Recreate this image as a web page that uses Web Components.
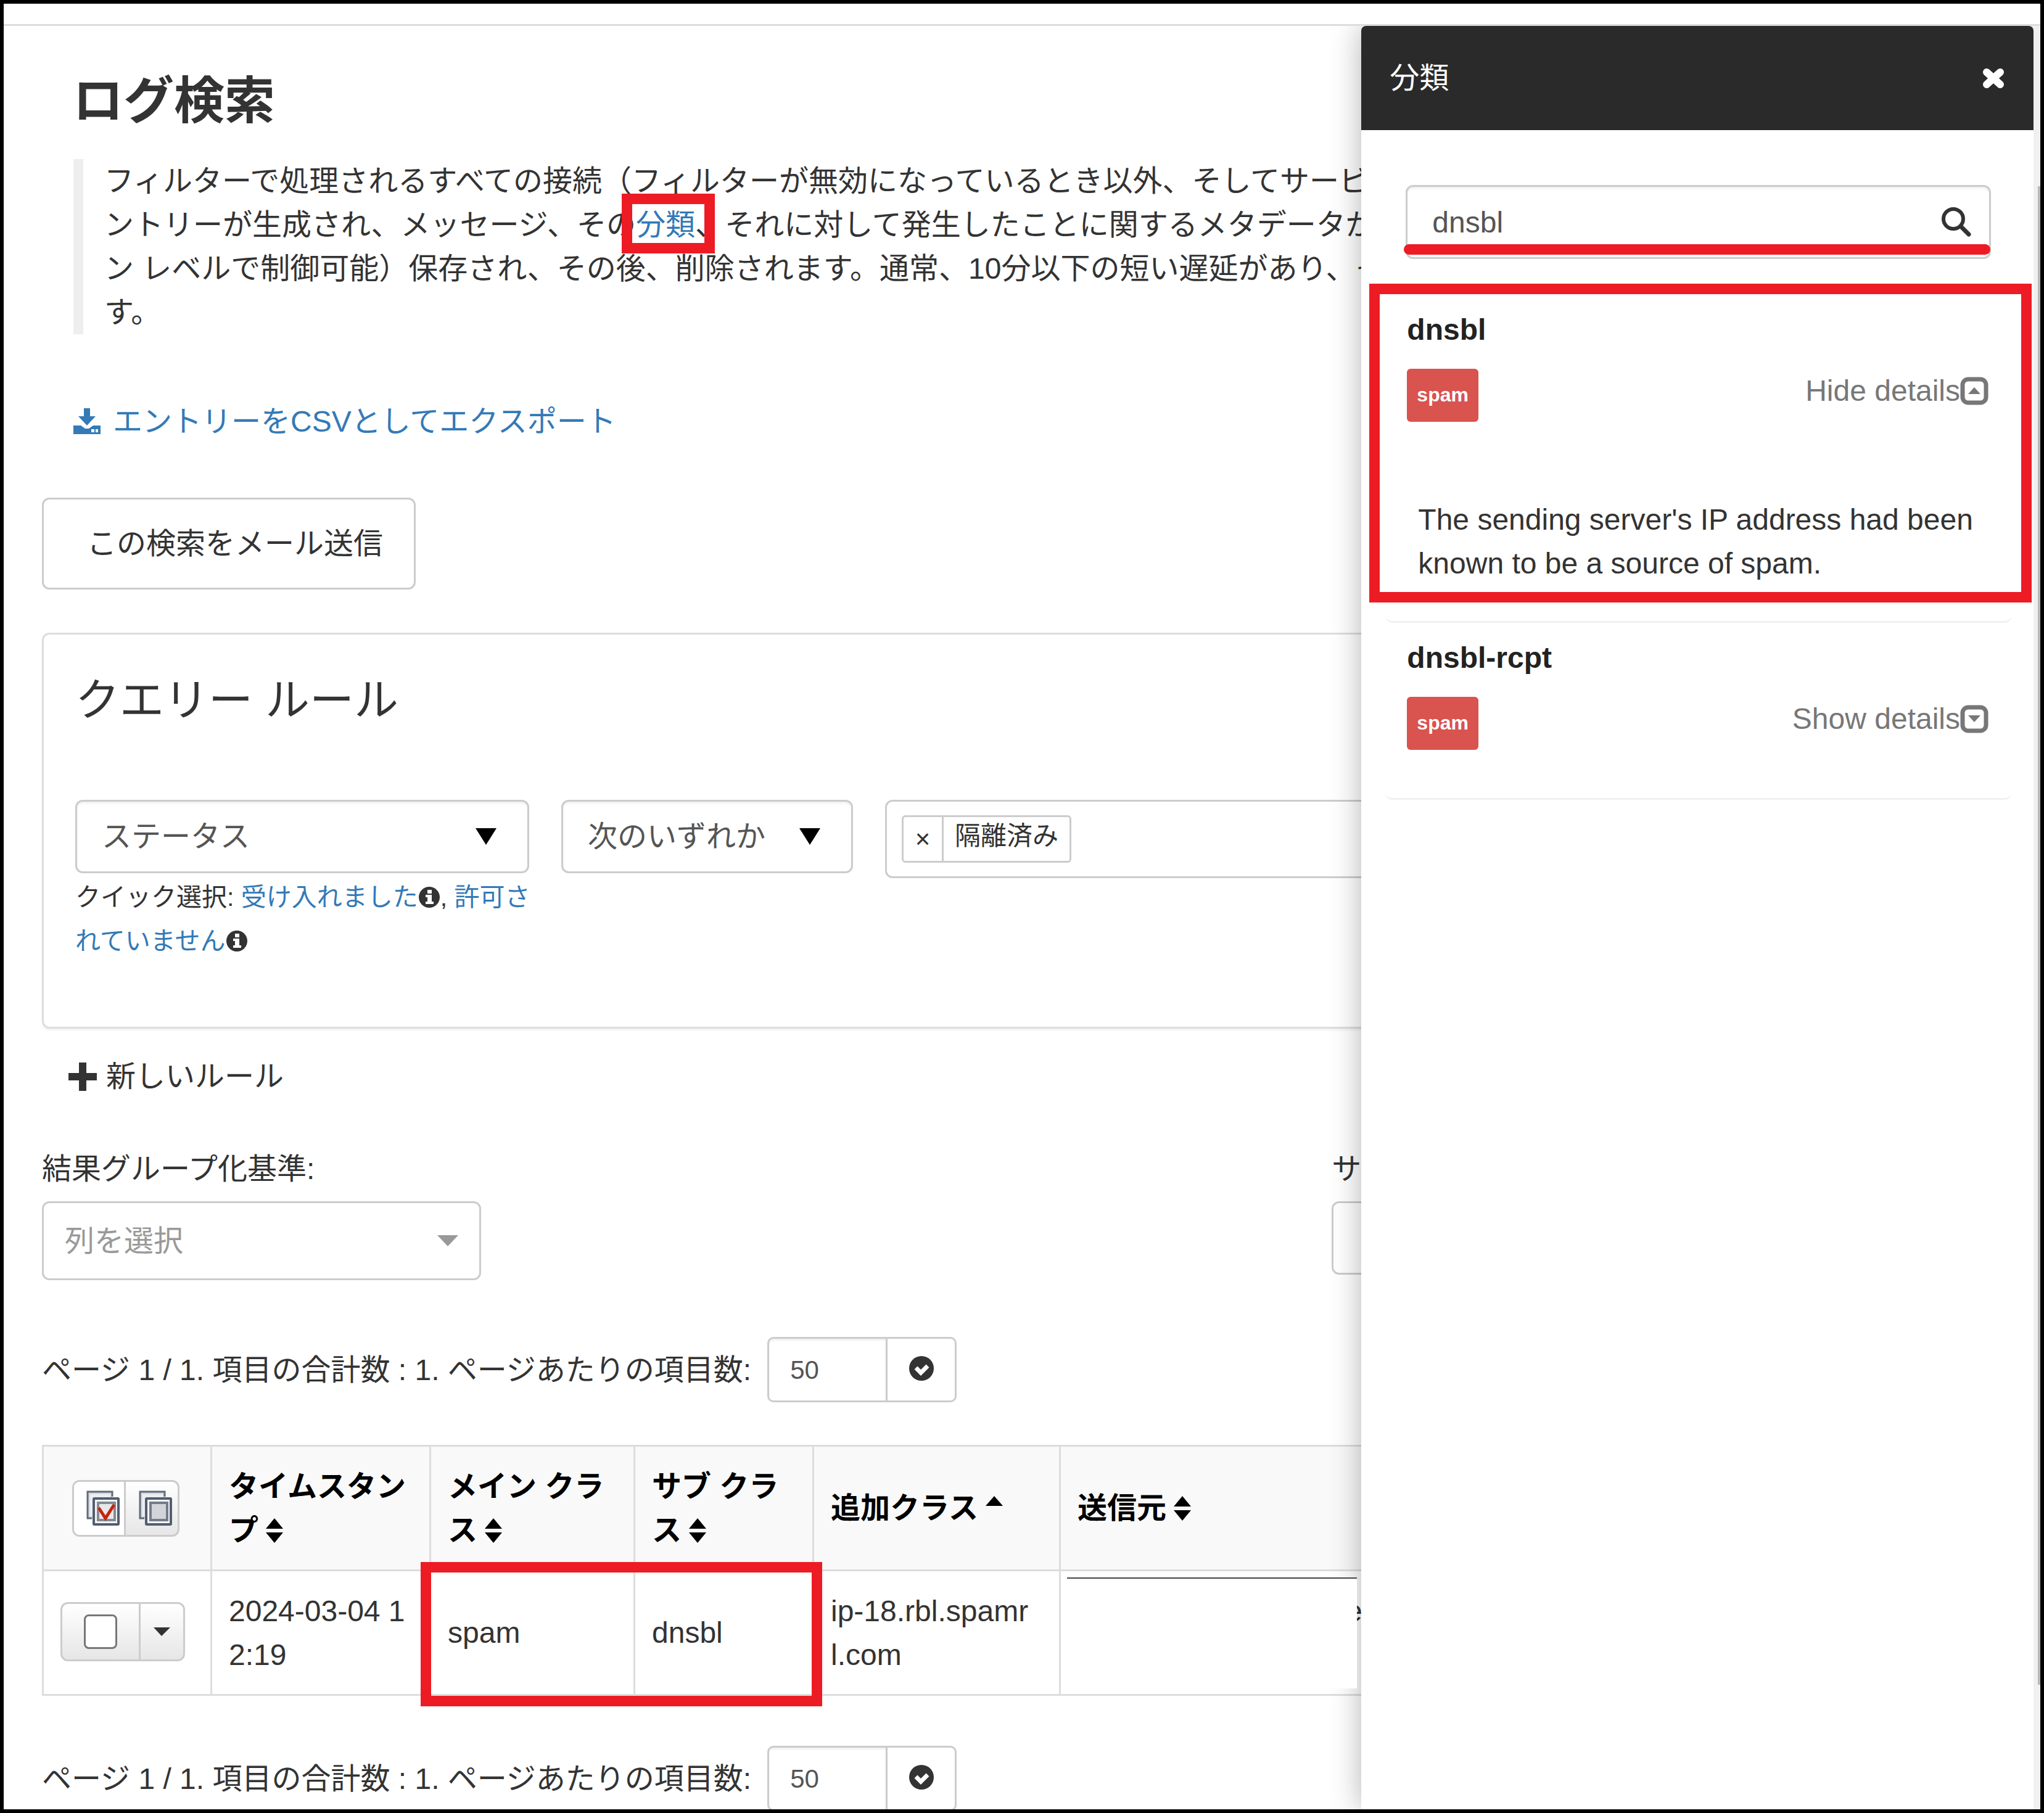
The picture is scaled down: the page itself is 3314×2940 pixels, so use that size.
<!DOCTYPE html>
<html lang="ja">
<head>
<meta charset="utf-8">
<title>ログ検索</title>
<style>
	body {
		margin: 0;
		font: 48px/71px "Liberation Sans", "Noto Sans CJK JP", sans-serif;
		color: #333;
		background: #fff;
	}
</style>
</head>
<body>
<log-app></log-app>

<script>
const CONTROL_STYLES = `
	* { box-sizing: border-box; }
	button, input, select { font: inherit; color: inherit; margin: 0; }
	a { color: #337ab7; text-decoration: none; }
`;

const ICONS = {
	download: {
		box: "0 0 44 44",
		body: `<path d="M17 0h10v13h9L22 28 8 13h9z"/><path fill-rule="evenodd" d="M0 28h12l7 5h6l7-5h12v14H0zM29 34v5h5v-5zM36 34v5h4v-5z"/>`,
	},
	times: {
		box: "0 0 38 36",
		body: `<path d="M8 8l22 20M30 8L8 28" fill="none" stroke="currentColor" stroke-width="12" stroke-linecap="round"/>`,
	},
	search: {
		box: "0 0 50 50",
		body: `<circle cx="20" cy="20" r="16" fill="none" stroke="currentColor" stroke-width="6"/><path d="M32 32l13 13" stroke="currentColor" stroke-width="7" stroke-linecap="round"/>`,
	},
	plus: { box: "0 0 46 46", body: `<path d="M17 0h12v17h17v12H29v17H17V29H0V17h17z"/>` },
	down: { box: "0 0 34 27", body: `<path d="M0 0h34L17 27z"/>` },
	caret: { box: "0 0 34 18", body: `<path d="M0 0h34L17 18z"/>` },
	"caret-small": { box: "0 0 27 14", body: `<path d="M0 0h27L13 14z"/>` },
	sort: { box: "0 0 28 40", body: `<path d="M14 0l14 17H0zM0 23h28L14 40z"/>` },
	"sort-up": { box: "0 0 28 40", body: `<path d="M14 0l14 16H0z"/>` },
	info: {
		box: "0 0 36 36",
		body: `<circle cx="18" cy="18" r="17"/><path fill="#fff" d="M15 6h7v6h-7zM12 14h10v11h3v4H12v-4h3v-7h-3z"/>`,
	},
	check: {
		box: "0 0 40 40",
		body: `<circle cx="20" cy="20" r="20"/><path d="M11 19l8 8 11-11" fill="none" stroke="#fff" stroke-width="7"/>`,
	},
	"square-up": {
		box: "0 0 46 46",
		body: `<rect x="4" y="4" width="38" height="38" rx="9" fill="none" stroke="currentColor" stroke-width="7"/><path d="M23 17l10 11H13z"/>`,
	},
	"square-down": {
		box: "0 0 46 46",
		body: `<rect x="4" y="4" width="38" height="38" rx="9" fill="none" stroke="currentColor" stroke-width="7"/><path d="M23 28l10-11H13z"/>`,
	},
	"check-all": {
		box: "0 0 54 57",
		body: `<path d="M9 45H2V2h40v8" fill="#d9dbe0" stroke="#5f6b7d" stroke-width="3"/><path d="M6 42V6h33v6H12v30z" fill="#eceef1"/><rect x="12" y="13" width="40" height="42" rx="1" fill="#f4f4f5" stroke="#525e70" stroke-width="4"/><rect x="19" y="20" width="27" height="28" fill="#e8e8ea" stroke="#858b95" stroke-width="4"/><path d="M20 28l11 17 14-22" fill="none" stroke="#c8230c" stroke-width="5"/>`,
	},
	"check-none": {
		box: "0 0 54 57",
		body: `<path d="M9 45H2V2h40v8" fill="#d9dbe0" stroke="#5f6b7d" stroke-width="3"/><path d="M6 42V6h33v6H12v30z" fill="#eceef1"/><rect x="12" y="13" width="40" height="42" rx="1" fill="#f4f4f5" stroke="#525e70" stroke-width="4"/><rect x="19" y="20" width="27" height="28" fill="#d3d4da" stroke="#747c89" stroke-width="4"/>`,
	},
};

class LogIconElement extends HTMLElement {
	constructor() {
		super();
		this.attachShadow({ mode: "open" });
	}

	connectedCallback() {
		const icon = ICONS[this.getAttribute("name")];
		const [, , width, height] = icon.box.split(" ");
		this.shadowRoot.innerHTML = `
			<style>
				:host { display: inline-block; flex: none; line-height: 0; }
				svg { display: block; fill: currentColor; }
			</style>
			<svg viewBox="${icon.box}" width="${width}" height="${height}" aria-hidden="true">${icon.body}</svg>
		`;
	}
}

class LogSelectElement extends HTMLElement {
	constructor() {
		super();
		this.attachShadow({ mode: "open" });
	}

	connectedCallback() {
		const value = this.getAttribute("value");
		const label = this.getAttribute("label");
		const icon = this.getAttribute("icon") || "down";
		this.shadowRoot.innerHTML = `
			<style>
				${CONTROL_STYLES}
				:host { display: grid; align-items: center; height: 119px; color: #555; }
				select, log-icon { grid-area: 1 / 1; }
				select {
					appearance: none;
					width: 100%;
					height: 100%;
					padding: 0 40px;
					border: 3px solid #ccc;
					border-radius: 12px;
					background: #fff;
					box-shadow: inset 0 3px 3px rgba(0, 0, 0, 0.06);
				}
				log-icon { justify-self: end; margin-right: 53px; color: #000; pointer-events: none; }
				:host([muted]) { height: 128px; color: #999; }
				:host([muted]) select { padding: 0 34px; box-shadow: none; }
				:host([muted]) log-icon { margin-right: 37px; color: #999; }
			</style>
			<select aria-label="${label}"><option>${value}</option></select>
			<log-icon name="${icon}"></log-icon>
		`;
	}
}

class LogRuleElement extends HTMLElement {
	constructor() {
		super();
		this.attachShadow({ mode: "open" });
	}

	connectedCallback() {
		this.shadowRoot.innerHTML = `
			<style>
				${CONTROL_STYLES}
				:host {
					display: block;
					padding: 66px 51px 103px;
					border: 3px solid #ddd;
					border-radius: 12px;
					box-shadow: 0 3px 3px rgba(0, 0, 0, 0.05);
				}
				h2 { margin: 0 0 122px; font-size: 72px; line-height: 80px; font-weight: 400; }
				.row { display: flex; align-items: flex-start; gap: 52px; }
				.field { width: 736px; }
				.operator { width: 473px; }
				.quick { margin: 4px 0 0; font-size: 41px; white-space: nowrap; }
				.quick log-icon { vertical-align: -4px; }
				.tags {
					flex: 1;
					height: 127px;
					padding: 22px 24px;
					border: 3px solid #ccc;
					border-radius: 12px;
				}
				.tag {
					display: inline-flex;
					height: 77px;
					border: 3px solid #ccc;
					border-radius: 6px;
					font-size: 42px;
					line-height: 62px;
				}
				.tag button {
					width: 65px;
					padding: 0;
					border: 0;
					border-right: 3px solid #ccc;
					background: none;
				}
				.tag span { padding: 0 18px; }
			</style>
			<h2>クエリー ルール</h2>
			<div class="row">
				<div class="field">
					<log-select label="フィールド" value="ステータス"></log-select>
					<p class="quick">クイック選択: <a href="#">受け入れました</a><log-icon name="info"></log-icon>, <a href="#">許可さ<br>れていません</a><log-icon name="info"></log-icon></p>
				</div>
				<log-select class="operator" label="条件" value="次のいずれか"></log-select>
				<div class="tags"><div class="tag"><button type="button">×</button><span>隔離済み</span></div></div>
			</div>
		`;
	}
}

class LogPagerElement extends HTMLElement {
	constructor() {
		super();
		this.attachShadow({ mode: "open" });
	}

	connectedCallback() {
		this.shadowRoot.innerHTML = `
			<style>
				${CONTROL_STYLES}
				:host { display: flex; align-items: center; gap: 26px; white-space: nowrap; }
				.group { display: flex; height: 106px; }
				input {
					width: 195px;
					padding: 0 34px;
					border: 3px solid #ccc;
					border-radius: 10px 0 0 10px;
					box-shadow: inset 0 3px 3px rgba(0, 0, 0, 0.06);
					font-size: 42px;
					color: #555;
				}
				button {
					display: grid;
					place-items: center;
					width: 112px;
					padding: 0 0 4px;
					border: 3px solid #ccc;
					border-left: 0;
					border-radius: 0 10px 10px 0;
					background: #fff;
				}
			</style>
			<label for="size">ページ 1 / 1. 項目の合計数 : 1. ページあたりの項目数:</label>
			<div class="group">
				<input id="size" type="text" value="50">
				<button type="button" aria-label="適用"><log-icon name="check"></log-icon></button>
			</div>
		`;
	}
}

class LogTableElement extends HTMLElement {
	constructor() {
		super();
		this.attachShadow({ mode: "open" });
	}

	connectedCallback() {
		this.shadowRoot.innerHTML = `
			<style>
				${CONTROL_STYLES}
				:host { display: block; position: relative; }
				table { width: 100%; table-layout: fixed; border-collapse: collapse; }
				th, td {
					height: 202px;
					padding: 28px 27px;
					border: 3px solid #ddd;
					text-align: left;
					vertical-align: middle;
				}
				th { background: #f9f9f9; color: #000; }
				th log-icon { vertical-align: -4px; margin-left: 12px; }
				.tools { padding: 0 4px 0 0; text-align: center; }
				td.tools { padding: 0 14px 4px 0; }
				.group {
					display: inline-flex;
					vertical-align: middle;
					border: 3px solid #ccc;
					border-radius: 12px;
					overflow: hidden;
					background: linear-gradient(#fff, #e6e6e6);
				}
				.group button {
					display: grid;
					place-items: center;
					width: 84px;
					height: 86px;
					padding: 0;
					border: 0;
					background: none;
				}
				.group > :first-child { border-right: 3px solid #ccc; }
				.group .on { background: #fff; }
				.pick { display: grid; place-items: center; width: 127px; height: 90px; }
				.pick input {
					appearance: none;
					width: 54px;
					height: 56px;
					border: 3px solid #777;
					border-radius: 8px;
					background: #fff;
				}
				.group .more { width: 69px; height: 90px; }
				.sender { padding: 10px 0 0 10px; vertical-align: top; }
				.sender div { display: flex; }
				.cover { z-index: 1; flex: none; width: 470px; height: 180px; border-top: 2px solid #444; background: #fff; }
				.address { margin: 19px 0 0 -18px; }
				.mark {
					position: absolute;
					left: 614px;
					top: 190px;
					width: 651px;
					height: 234px;
					border: 17px solid #ed1c24;
				}
			</style>
			<table>
				<colgroup>
					<col style="width: 273px"><col style="width: 355px"><col style="width: 331px">
					<col style="width: 290px"><col style="width: 400px"><col>
				</colgroup>
				<thead>
					<tr>
						<th class="tools">
							<div class="group">
								<button class="on" type="button" aria-label="すべて選択"><log-icon name="check-all"></log-icon></button>
								<button type="button" aria-label="選択解除"><log-icon name="check-none"></log-icon></button>
							</div>
						</th>
						<th>タイムスタン<br>プ<log-icon name="sort"></log-icon></th>
						<th>メイン クラ<br>ス<log-icon name="sort"></log-icon></th>
						<th>サブ クラ<br>ス<log-icon name="sort"></log-icon></th>
						<th>追加クラス<log-icon name="sort-up"></log-icon></th>
						<th>送信元<log-icon name="sort"></log-icon></th>
					</tr>
				</thead>
				<tbody>
					<tr>
						<td class="tools">
							<div class="group">
								<label class="pick"><input type="checkbox" aria-label="行を選択"></label>
								<button class="more" type="button" aria-label="操作"><log-icon name="caret-small"></log-icon></button>
							</div>
						</td>
						<td>2024-03-04 1<br>2:19</td>
						<td>spam</td>
						<td>dnsbl</td>
						<td>ip-18.rbl.spamr<br>l.com</td>
						<td class="sender"><div><span class="cover"></span><span class="address">e</span></div></td>
					</tr>
				</tbody>
			</table>
			<div class="mark"></div>
		`;
	}
}

class ClassCardElement extends HTMLElement {
	constructor() {
		super();
		this.attachShadow({ mode: "open" });
	}

	connectedCallback() {
		const open = this.hasAttribute("open");
		this.shadowRoot.innerHTML = `
			<style>
				${CONTROL_STYLES}
				:host {
					display: block;
					position: relative;
					padding: 21px 38px 0 35px;
					border-bottom: 3px solid #f1f1f1;
					border-radius: 12px;
				}
				h3 { margin: 0 0 28px; font-size: 48px; color: #222; }
				.row { display: flex; justify-content: space-between; align-items: flex-start; padding-bottom: 78px; }
				.badge {
					height: 86px;
					padding: 0 16px;
					border-radius: 6px;
					background: #d9534f;
					color: #fff;
					font-size: 32px;
					font-weight: 700;
					line-height: 84px;
				}
				button {
					display: flex;
					align-items: center;
					padding: 0;
					border: 0;
					background: none;
					color: #777;
				}
				.details { padding: 45px 12px 58px 18px; }
				:host([open])::after {
					content: "";
					position: absolute;
					inset: -18px -32px 30px -26px;
					border: 17px solid #ed1c24;
					pointer-events: none;
				}
			</style>
			<h3>${this.getAttribute("name")}</h3>
			<div class="row">
				<span class="badge">spam</span>
				<button type="button">${open ? "Hide" : "Show"} details<log-icon name="${open ? "square-up" : "square-down"}"></log-icon></button>
			</div>
			${open ? `<div class="details"><slot></slot></div>` : ""}
		`;
	}
}

class ClassDrawerElement extends HTMLElement {
	constructor() {
		super();
		this.attachShadow({ mode: "open" });
	}

	connectedCallback() {
		this.shadowRoot.innerHTML = `
			<style>
				${CONTROL_STYLES}
				:host {
					display: block;
					border-radius: 8px 8px 0 0;
					background: #fff;
					box-shadow: 0 0 50px rgba(0, 0, 0, 0.3);
				}
				header {
					display: flex;
					align-items: center;
					justify-content: space-between;
					height: 169px;
					padding: 0 46px;
					border-radius: 8px 8px 0 0;
					background: #2a2a2a;
					color: #fff;
				}
				header h2 { margin: 0; font-size: 48px; font-weight: 400; }
				header button { padding: 0; border: 0; background: none; line-height: 0; }
				.search {
					position: relative;
					display: flex;
					align-items: center;
					height: 120px;
					margin: 89px 69px 58px 72px;
					padding: 0 28px 0 40px;
					border: 3px solid #ccc;
					border-radius: 12px;
					box-shadow: inset 0 3px 3px rgba(0, 0, 0, 0.06);
				}
				.search input { flex: 1; min-width: 0; padding: 0; border: 0; outline: 0; background: none; color: #555; }
				.search::after {
					content: "";
					position: absolute;
					left: -6px;
					right: -2px;
					bottom: 4px;
					height: 17px;
					border-radius: 9px;
					background: #ed1c24;
				}
				.list { padding: 0 35px 0 39px; }
			</style>
			<header><h2>分類</h2><button type="button" aria-label="閉じる"><log-icon name="times"></log-icon></button></header>
			<div class="search">
				<input type="text" value="dnsbl" aria-label="分類を検索">
				<log-icon name="search"></log-icon>
			</div>
			<div class="list">
				<class-card name="dnsbl" open>The sending server's IP address had been known to be a source of spam.</class-card>
				<class-card name="dnsbl-rcpt"></class-card>
			</div>
		`;
	}
}

class LogAppElement extends HTMLElement {
	constructor() {
		super();
		this.attachShadow({ mode: "open" });
	}

	connectedCallback() {
		this.shadowRoot.innerHTML = `
			<style>
				${CONTROL_STYLES}
				:host {
					display: block;
					position: relative;
					box-sizing: border-box;
					height: 100vh;
					border: 6px solid #000;
					overflow: hidden;
				}
				.topbar {
					position: relative;
					z-index: 1;
					height: 36px;
					border-bottom: 3px solid #ddd;
					background: #fff;
				}
				main { padding: 78px 103px 0 62px; }
				h1 { margin: 0 50px; font-size: 82px; line-height: 88px; }
				blockquote {
					margin: 50px 0 0 51px;
					padding-left: 34px;
					border-left: 16px solid #eee;
					white-space: nowrap;
				}
				.marked { position: relative; }
				.marked::after {
					content: "";
					position: absolute;
					inset: -24px 16px -20px -23px;
					border: 17px solid #ed1c24;
				}
				.export { display: flex; align-items: center; gap: 20px; margin: 106px 51px 88px; }
				.mail {
					display: block;
					height: 149px;
					margin-bottom: 70px;
					padding: 0 50px 0 70px;
					border: 3px solid #ccc;
					border-radius: 12px;
					background: #fff;
				}
				.add {
					display: flex;
					align-items: center;
					gap: 15px;
					margin: 42px 43px 79px;
					padding: 0;
					border: 0;
					background: none;
				}
				.grouping { display: grid; grid-template-columns: 2fr 1fr; margin-bottom: 92px; }
				.grouping > div { display: grid; gap: 17px; align-content: start; }
				.grouping log-select { width: 712px; }
				.grouping input { width: 100%; height: 119px; border: 3px solid #ccc; border-radius: 12px; }
				log-table { margin: 69px 0 81px; }
				.scroll { position: absolute; top: 36px; right: 0; bottom: 0; width: 11px; background: #f0f0f0; }
				.scroll::after {
					content: "";
					position: absolute;
					top: 9%;
					right: 0;
					width: 4px;
					height: 84%;
					background: #b8b8b8;
				}
				class-drawer { position: absolute; top: 36px; right: 11px; bottom: 0; width: 33%; }
			</style>
			<div class="topbar"></div>
			<main>
				<h1>ログ検索</h1>
				<blockquote>フィルターで処理されるすべての接続（フィルターが無効になっているとき以外、そしてサービ<br>ントリーが生成され、メッセージ、その<span class="marked"><a href="#">分類</a>、</span>それに対して発生したことに関するメタデータが<br>ン レベルで制御可能）保存され、その後、削除されます。通常、10分以下の短い遅延があり、そ<br>す。</blockquote>
				<a class="export" href="#"><log-icon name="download"></log-icon>エントリーをCSVとしてエクスポート</a>
				<button class="mail" type="button">この検索をメール送信</button>
				<log-rule></log-rule>
				<button class="add" type="button"><log-icon name="plus"></log-icon>新しいルール</button>
				<div class="grouping">
					<div>
						<span>結果グループ化基準:</span>
						<log-select muted icon="caret" label="結果グループ化基準" value="列を選択"></log-select>
					</div>
					<div>
						<label for="summary">サ</label>
						<input id="summary" type="text">
					</div>
				</div>
				<log-pager></log-pager>
				<log-table></log-table>
				<log-pager></log-pager>
			</main>
			<class-drawer></class-drawer>
			<div class="scroll"></div>
		`;
	}
}

customElements.define("log-icon", LogIconElement);
customElements.define("log-select", LogSelectElement);
customElements.define("log-rule", LogRuleElement);
customElements.define("log-pager", LogPagerElement);
customElements.define("log-table", LogTableElement);
customElements.define("class-card", ClassCardElement);
customElements.define("class-drawer", ClassDrawerElement);
customElements.define("log-app", LogAppElement);
</script>
</body>
</html>
